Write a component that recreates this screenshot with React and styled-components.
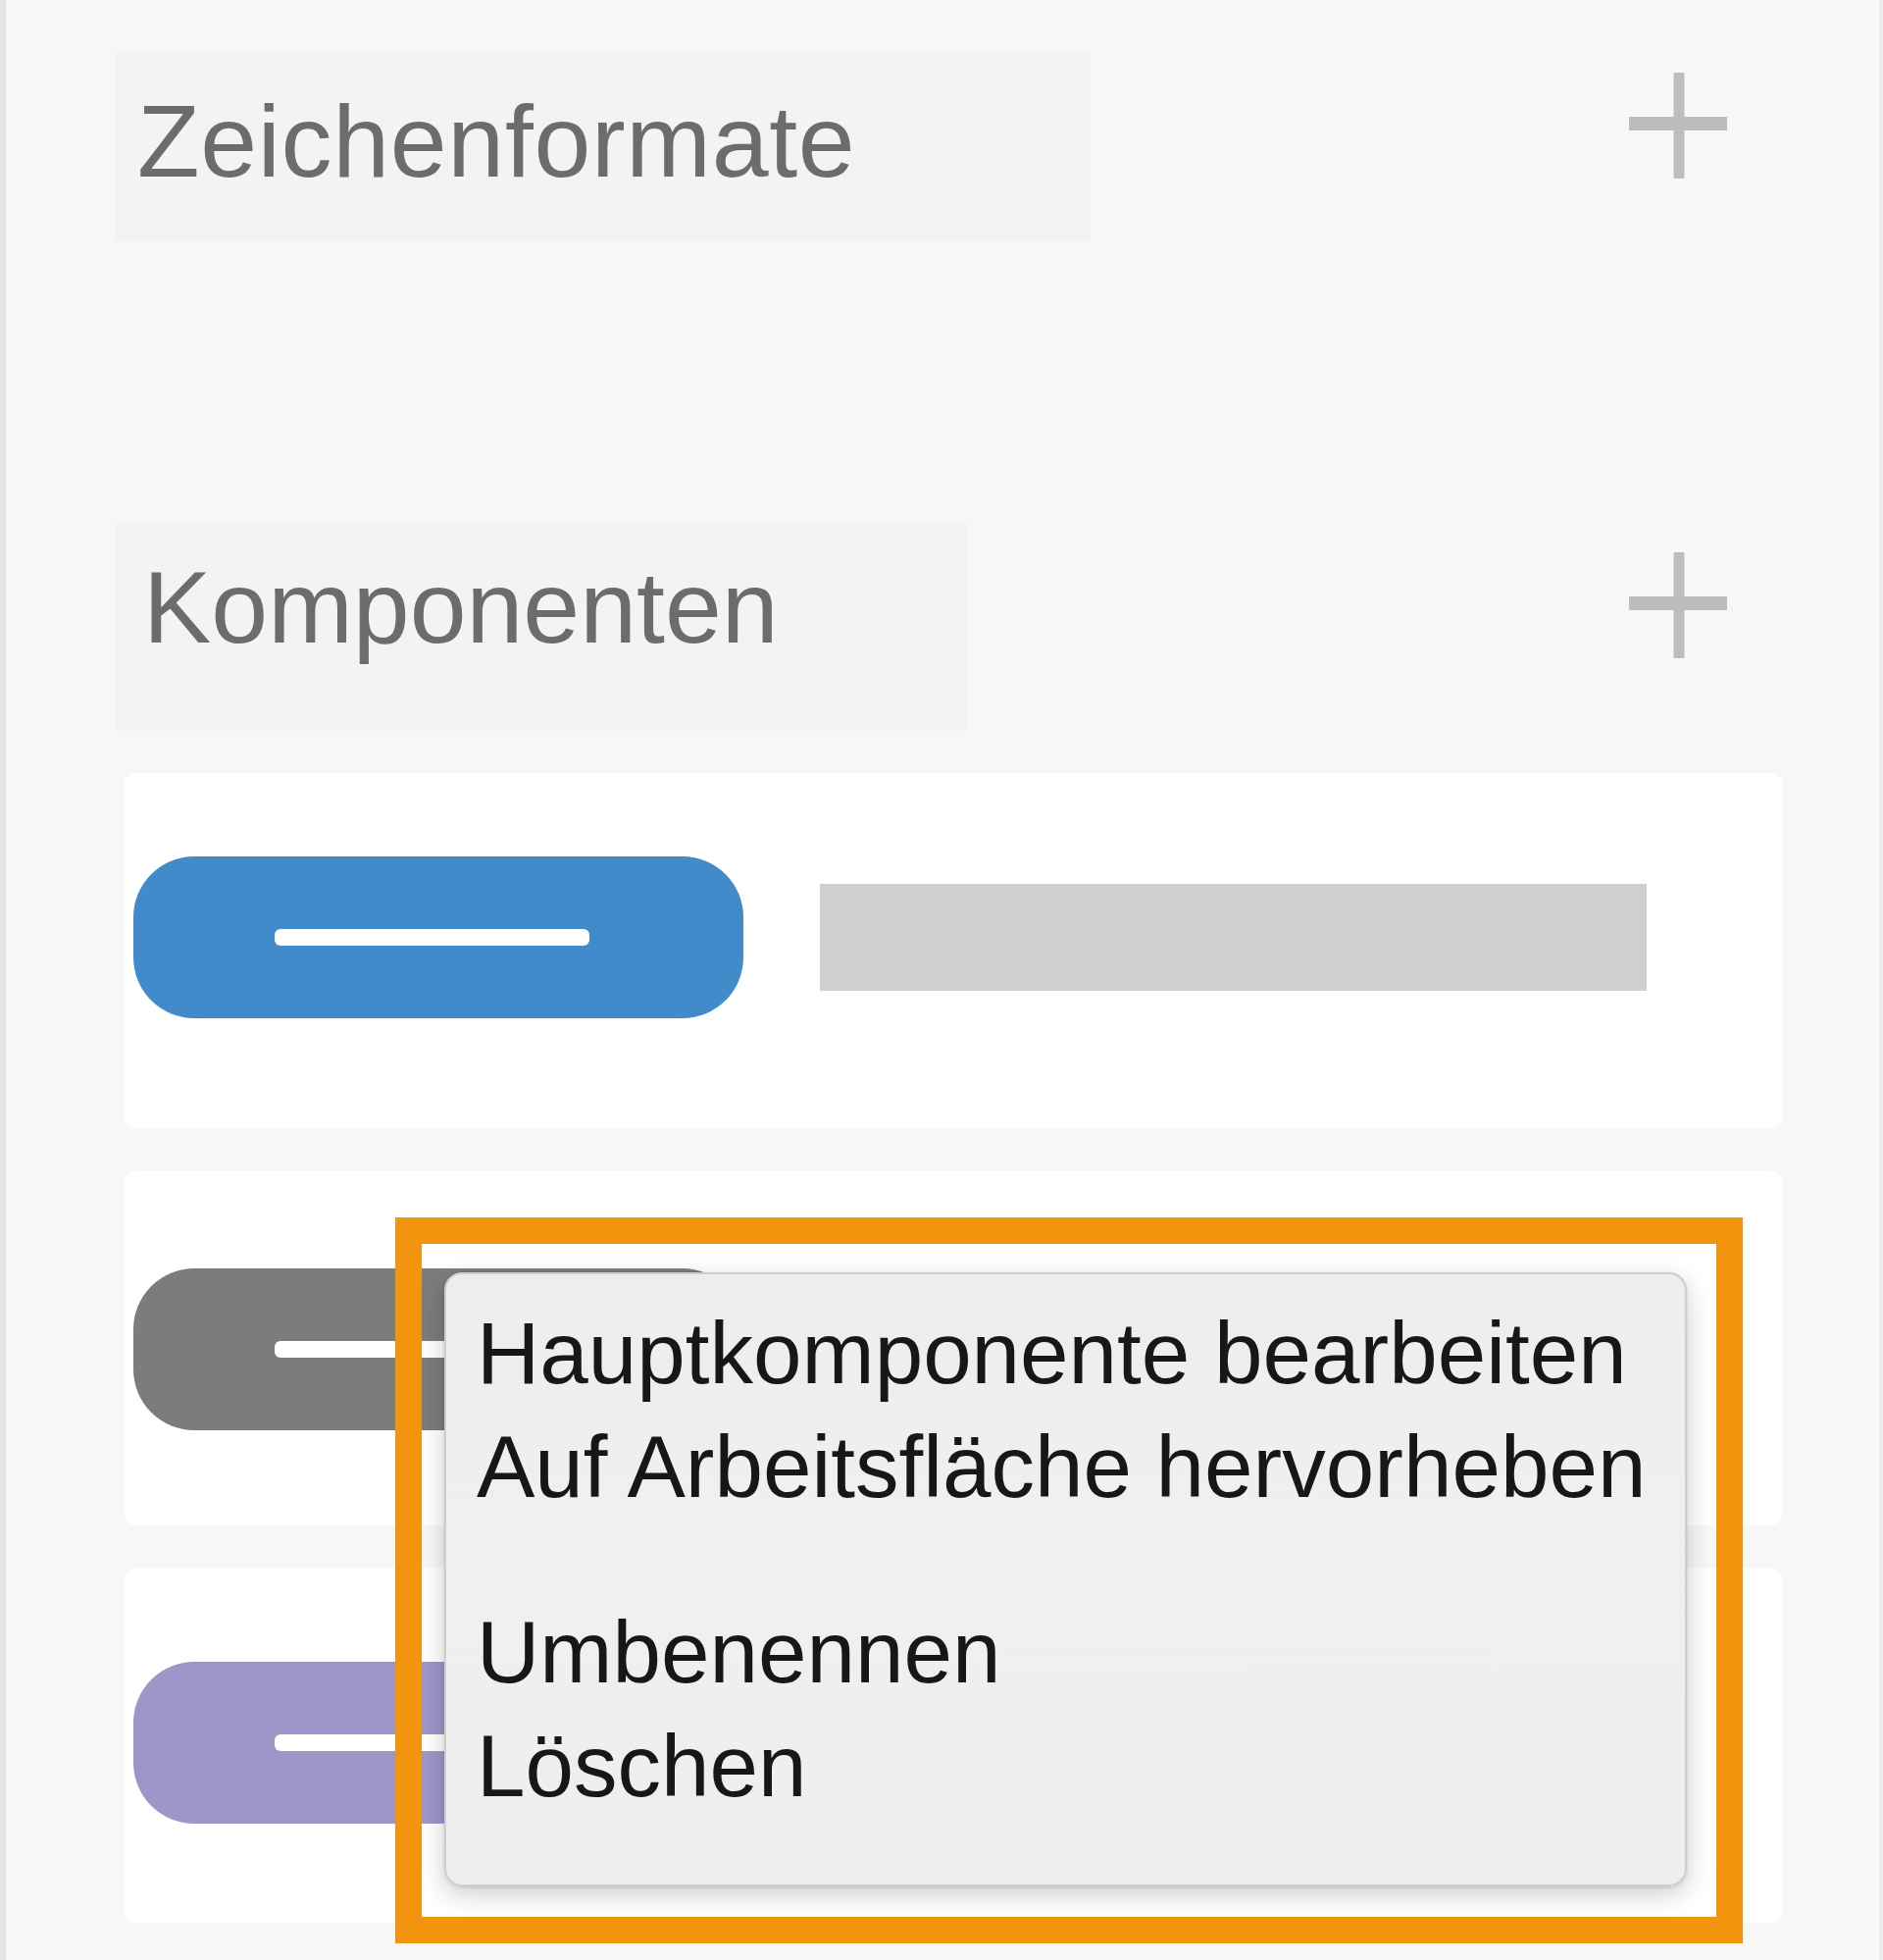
import React from "react";
import styled, { createGlobalStyle } from "styled-components";

const Global = createGlobalStyle`
  html, body { margin: 0; padding: 0; background: #f7f7f7; }
  * { box-sizing: border-box; }
`;

const Page = styled.div`
  width: 1920px;
  min-height: 1998px;
  background: #f7f7f7;
  border-left: 6px solid #e4e4e4;
  border-right: 4px solid #ededed;
  padding: 52px 0 0 112px;
  font-family: "Liberation Sans", Arial, Helvetica, sans-serif;
`;

const HeaderRow = styled.div`
  display: flex;
  align-items: flex-start;
  width: 1643px;
  margin-top: ${(p) => p.$mt || 0}px;
`;

const TitleBox = styled.div`
  width: ${(p) => p.$w}px;
  background: #f3f3f3;
  padding: ${(p) => p.$pt}px 0 ${(p) => p.$pb}px ${(p) => p.$pl}px;
  font-size: 104px;
  line-height: 104px;
  letter-spacing: ${(p) => p.$ls || 0}px;
  color: #6c6c6c;
  white-space: nowrap;
`;

const PlusButton = styled.button`
  margin-left: auto;
  margin-top: ${(p) => p.$mt}px;
  width: 100px;
  height: 108px;
  padding: 0;
  border: none;
  background: transparent;
  display: block;
  cursor: pointer;
  svg { display: block; }
`;

const CardList = styled.div`
  position: relative;
  margin: 43px 0 0 8px;
  width: 1692px;
  display: flex;
  flex-direction: column;
  gap: 43px;
`;

const Card = styled.div`
  height: 362px;
  background: #ffffff;
  border-radius: 14px;
  padding: ${(p) => p.$pt}px 0 0 10px;
  display: flex;
  align-items: flex-start;
`;

const Row = styled.div`
  display: flex;
  align-items: center;
  gap: 78px;
`;

const Pill = styled.div`
  width: 622px;
  height: 165px;
  border-radius: 62px;
  background: ${(p) => p.$color};
  display: flex;
  align-items: center;
  padding-left: 144px;
`;

const PillLine = styled.div`
  width: 321px;
  height: 17px;
  border-radius: 6px;
  background: #ffffff;
`;

const Placeholder = styled.div`
  width: 843px;
  height: 109px;
  background: #cfcfcd;
`;

const Highlight = styled.div`
  position: absolute;
  left: 277px;
  top: 453px;
  width: 1374px;
  height: 740px;
  border: 27px solid #f3940f;
  padding: 29px 30px 31px 23px;
  z-index: 2;
`;

const Menu = styled.div`
  width: 1267px;
  height: 626px;
  border-radius: 18px;
  background: linear-gradient(180deg, #ededed 0%, #f0f0f0 45%, #eeeeee 100%);
  border: 2px solid #cecece;
  box-shadow: 0 8px 26px rgba(0, 0, 0, 0.2), 0 1px 3px rgba(0, 0, 0, 0.12);
  padding: 22px 0 0 31px;
  display: flex;
  flex-direction: column;
`;

const MenuGroup = styled.div`
  display: flex;
  flex-direction: column;
  & + & { margin-top: 73px; }
`;

const MenuItem = styled.div`
  font-size: 89px;
  line-height: 116px;
  color: #171717;
  white-space: nowrap;
`;

function PlusIcon() {
  return (
    <svg width="100" height="108" viewBox="0 0 100 108">
      <rect x="45.5" y="0" width="11" height="108" fill="#bdbdbd" />
      <rect x="0" y="45" width="100" height="14" fill="#bdbdbd" />
    </svg>
  );
}

const cards = [
  { color: "#428bca", pt: 85 },
  { color: "#7b7c7b", pt: 100 },
  { color: "#9f95c9", pt: 96 },
];

export default function App() {
  return (
    <>
      <Global />
      <Page>
        <HeaderRow>
          <TitleBox $w={994} $pt={40} $pb={50} $pl={22} $ls={0.7}>
            Zeichenformate
          </TitleBox>
          <PlusButton $mt={22} aria-label="Zeichenformat hinzufügen">
            <PlusIcon />
          </PlusButton>
        </HeaderRow>

        <HeaderRow $mt={286}>
          <TitleBox $w={868} $pt={35} $pb={74} $pl={28}>
            Komponenten
          </TitleBox>
          <PlusButton $mt={31} aria-label="Komponente hinzufügen">
            <PlusIcon />
          </PlusButton>
        </HeaderRow>

        <CardList>
          {cards.map((c, i) => (
            <Card key={i} $pt={c.pt}>
              <Row>
                <Pill $color={c.color}>
                  <PillLine />
                </Pill>
                <Placeholder />
              </Row>
            </Card>
          ))}
          <Highlight>
            <Menu>
              <MenuGroup>
                <MenuItem>Hauptkomponente bearbeiten</MenuItem>
                <MenuItem>Auf Arbeitsfläche hervorheben</MenuItem>
              </MenuGroup>
              <MenuGroup>
                <MenuItem>Umbenennen</MenuItem>
                <MenuItem>Löschen</MenuItem>
              </MenuGroup>
            </Menu>
          </Highlight>
        </CardList>
      </Page>
    </>
  );
}
